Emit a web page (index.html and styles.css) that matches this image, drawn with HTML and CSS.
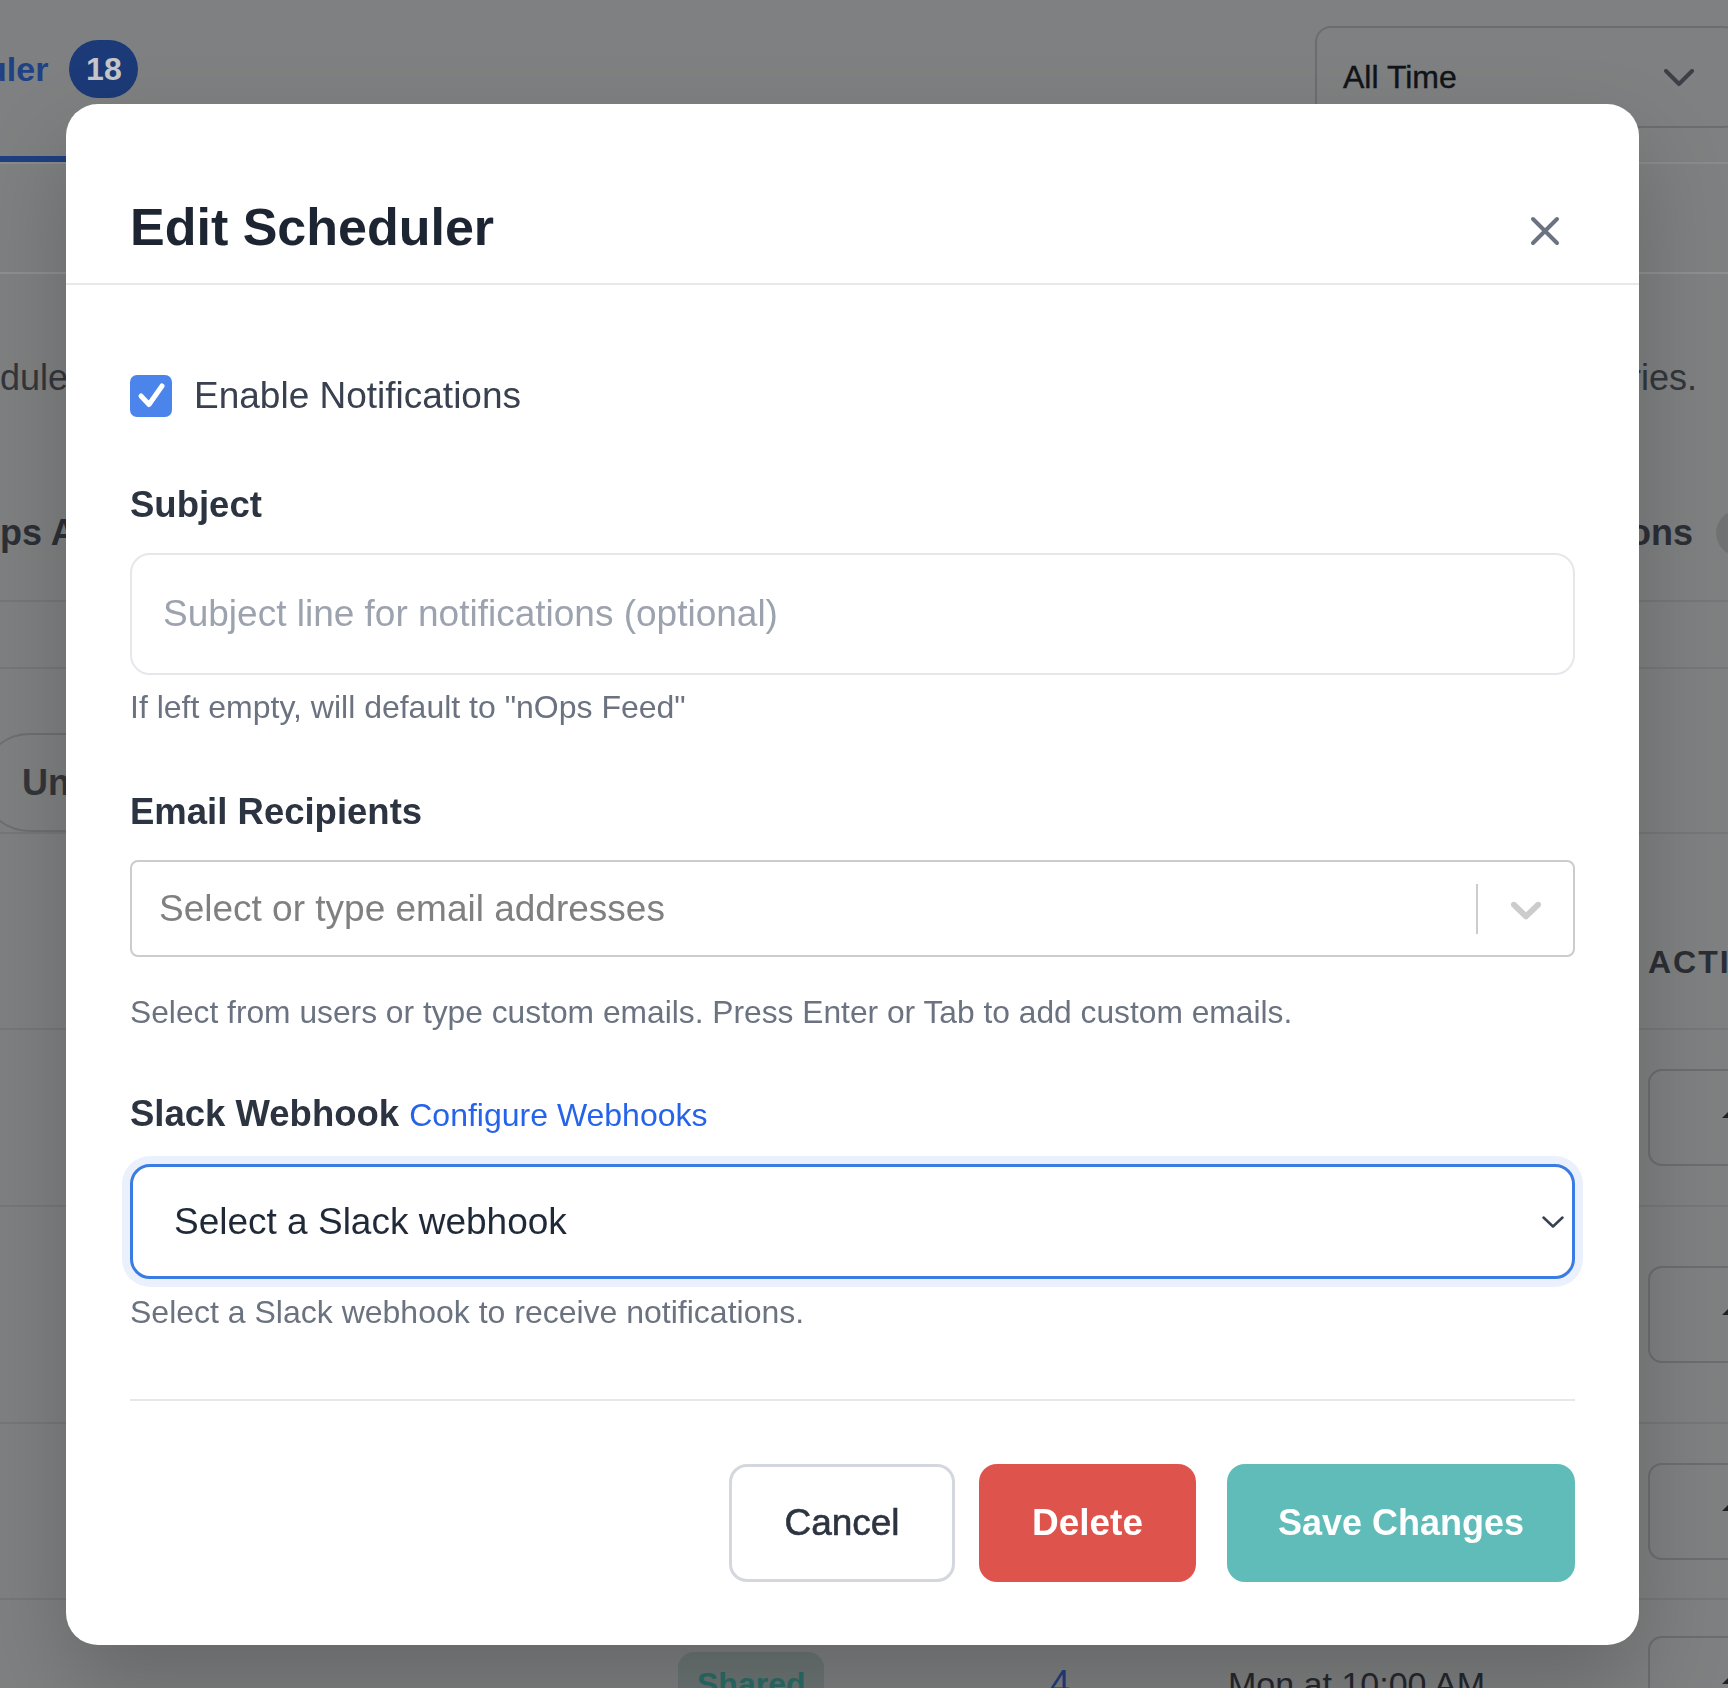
FILE: index.html
```html
<!DOCTYPE html>
<html lang="en">
<head>
    <meta charset="UTF-8">
    <title>Edit Scheduler</title>
    <link rel="stylesheet" href="styles.css">
</head>
<body>
<!--后面的页面（被遮罩压暗）-->
<div class="page">
    <div class="topbar">
        <div class="tab">
            <span class="tab-name">Scheduler</span>
            <span class="tab-count">18</span>
        </div>
        <div class="range">
            <span>All Time</span>
            <svg width="30" height="17" viewBox="0 0 30 17"><path d="M2 2L15 15L28 2" fill="none" stroke="#3c3f45" stroke-width="4" stroke-linecap="round" stroke-linejoin="round"/></svg>
        </div>
    </div>
    <div class="filters"></div>
    <div class="intro">
        <span class="intro-left">Schedule nOps Feed digests for your team</span>
        <span class="intro-right">for selected categories.</span>
    </div>
    <div class="section-head">
        <span class="sh-left">nOps AI Insights</span>
        <span class="sh-right">Scheduled Notifications <span class="sh-count"></span></span>
    </div>
    <div class="subbar"></div>
    <div class="chips"><span class="chip">Unshared</span></div>
    <div class="thead">
        <span></span>
        <span>Status</span>
        <span>Users</span>
        <span>Schedule</span>
        <span>Actions</span>
    </div>
    <div class="row row-a">
        <span></span>
        <span class="pill">Shared</span>
        <span class="count">4</span>
        <span class="when">Mon at 10:00 AM</span>
        <span class="act"><svg width="40" height="40" viewBox="0 0 40 40"><path d="M20 4L4 20H14V36H26V20H36Z" fill="#1f2126"/></svg></span>
    </div>
    <div class="row row-b">
        <span></span>
        <span class="pill">Shared</span>
        <span class="count">4</span>
        <span class="when">Mon at 10:00 AM</span>
        <span class="act"><svg width="40" height="40" viewBox="0 0 40 40"><path d="M20 4L4 20H14V36H26V20H36Z" fill="#1f2126"/></svg></span>
    </div>
    <div class="row row-c">
        <span></span>
        <span class="pill">Shared</span>
        <span class="count">4</span>
        <span class="when">Mon at 10:00 AM</span>
        <span class="act"><svg width="40" height="40" viewBox="0 0 40 40"><path d="M20 4L4 20H14V36H26V20H36Z" fill="#1f2126"/></svg></span>
    </div>
    <div class="row row-d">
        <span></span>
        <span class="pill">Shared</span>
        <span class="count">4</span>
        <span class="when">Mon at 10:00 AM</span>
        <span class="act"><svg width="40" height="40" viewBox="0 0 40 40"><path d="M20 4L4 20H14V36H26V20H36Z" fill="#1f2126"/></svg></span>
    </div>
</div>

<!--弹窗-->
<div class="overlay">
    <div class="modal">
        <div class="modal-head">
            <h2 class="modal-title">Edit Scheduler</h2>
            <button class="close" type="button">
                <svg width="30" height="30" viewBox="0 0 30 30"><path d="M3 3L27 27M27 3L3 27" fill="none" stroke="#6b7280" stroke-width="4" stroke-linecap="round"/></svg>
            </button>
        </div>
        <div class="modal-body">
            <div class="check-row">
                <span class="checkbox">
                    <svg width="42" height="42" viewBox="0 0 42 42"><path d="M11 21L19 29.5L32 11" fill="none" stroke="#fff" stroke-width="5" stroke-linecap="round" stroke-linejoin="round"/></svg>
                </span>
                <span>Enable Notifications</span>
            </div>

            <div class="field field-subject">
                <div class="label">Subject</div>
                <input class="text-input" type="text" placeholder="Subject line for notifications (optional)">
                <div class="hint">If left empty, will default to "nOps Feed"</div>
            </div>

            <div class="field field-email">
                <div class="label">Email Recipients</div>
                <div class="multi">
                    <span class="multi-value">Select or type email addresses</span>
                    <span class="multi-sep"></span>
                    <span class="multi-arrow">
                        <svg width="52" height="52" viewBox="0 0 20 20"><path fill="#cccccc" d="M4.516 7.548c0.436-0.446 1.043-0.481 1.576 0l3.908 3.747 3.908-3.747c0.533-0.481 1.141-0.446 1.574 0 0.436 0.445 0.408 1.197 0 1.615-0.406 0.418-4.695 4.502-4.695 4.502-0.217 0.223-0.502 0.335-0.787 0.335s-0.57-0.112-0.789-0.335c0 0-4.287-4.084-4.695-4.502s-0.436-1.17 0-1.615z"/></svg>
                    </span>
                </div>
                <div class="hint">Select from users or type custom emails. Press Enter or Tab to add custom emails.</div>
            </div>

            <div class="field field-slack">
                <div class="label">Slack Webhook <a class="link" href="#">Configure Webhooks</a></div>
                <div class="select">
                    <span>Select a Slack webhook</span>
                    <svg width="22" height="12" viewBox="0 0 22 12"><path d="M1.5 1.5L11 10.5L20.5 1.5" fill="none" stroke="#374151" stroke-width="2.5" stroke-linecap="round" stroke-linejoin="round"/></svg>
                </div>
                <div class="hint">Select a Slack webhook to receive notifications.</div>
            </div>
        </div>
        <div class="modal-foot">
            <button class="btn btn-cancel" type="button">Cancel</button>
            <button class="btn btn-delete" type="button">Delete</button>
            <button class="btn btn-save" type="button">Save Changes</button>
        </div>
    </div>
</div>
</body>
</html>
```

FILE: styles.css
```css
* {
    margin: 0;
    padding: 0;
    box-sizing: border-box;
}

body {
    font-family: "Liberation Sans", Arial, sans-serif;
    background: #7f8081;
    overflow: hidden;
}

/* 背景页面 */
.page {
    width: 1728px;
    height: 1688px;
    overflow: hidden;
}

.topbar {
    display: flex;
    justify-content: space-between;
    align-items: flex-start;
    height: 164px;
    border-bottom: 2px solid #8a8b8c;
}

.tab {
    display: flex;
    align-items: flex-start;
    gap: 21px;
    height: 162px;
    padding-top: 40px;
    margin-left: -116px;
    border-bottom: 6px solid #1f3f80;
}

.tab-name {
    font-size: 34px;
    line-height: 58px;
    font-weight: bold;
    color: #1f4185;
}

.tab-count {
    width: 69px;
    height: 58px;
    border-radius: 29px;
    background: #1b3a77;
    color: #c4c6ca;
    font-size: 32px;
    font-weight: bold;
    display: flex;
    align-items: center;
    justify-content: center;
}

.range {
    margin-top: 26px;
    margin-right: -12px;
    width: 425px;
    height: 102px;
    border: 2px solid #6c6d6f;
    border-radius: 16px;
    display: flex;
    align-items: center;
    justify-content: space-between;
    padding: 0 44px 0 26px;
    font-size: 32px;
    color: #111418;
    -webkit-text-stroke: 0.4px #111418;
}

.filters {
    height: 110px;
    border-bottom: 2px solid #8e8f90;
}

.intro {
    height: 208px;
    display: flex;
    justify-content: space-between;
    align-items: center;
    padding-right: 31px;
    font-size: 36px;
    color: #33363b;
    white-space: nowrap;
}

.intro-left {
    margin-left: -82px;
}

.section-head {
    height: 118px;
    padding-bottom: 16px;
    margin-right: -34px;
    display: flex;
    justify-content: space-between;
    align-items: center;
    font-size: 36px;
    font-weight: bold;
    color: #2c2f35;
    white-space: nowrap;
}

.sh-left {
    margin-left: -50px;
}

.sh-right {
    display: flex;
    align-items: center;
    gap: 23px;
}

.sh-count {
    width: 46px;
    height: 46px;
    border-radius: 50%;
    background: #717274;
}

.subbar {
    height: 69px;
    border-top: 2px solid #767778;
    border-bottom: 2px solid #767778;
}

.chips {
    height: 165px;
    padding-top: 64px;
    border-bottom: 2px solid #767778;
}

.chip {
    display: inline-flex;
    align-items: center;
    height: 99px;
    margin-left: -20px;
    padding: 0 40px;
    border: 2px solid #6e6f71;
    border-radius: 50px;
    font-size: 36px;
    font-weight: bold;
    color: #33353a;
}

.thead,
.row {
    display: grid;
    grid-template-columns: 678px 372px 178px 420px 1fr;
    border-bottom: 2px solid #767778;
}

.thead {
    height: 196px;
    padding-bottom: 46px;
    align-items: end;
    font-size: 32px;
    line-height: 40px;
    font-weight: bold;
    letter-spacing: 2px;
    text-transform: uppercase;
    color: #2b2e33;
}

.row {
    align-items: center;
}

.row-a { height: 177px; }
.row-b { height: 217px; }
.row-c { height: 176px; }
.row-d { height: 170px; }

.pill {
    justify-self: start;
    display: flex;
    align-items: center;
    height: 64px;
    padding: 0 19px;
    border-radius: 16px;
    background: #6c7675;
    color: #2b6d68;
    font-size: 32px;
    font-weight: bold;
}

.count {
    font-size: 36px;
    color: #1f3f80;
}

.when {
    font-size: 34px;
    color: #25282d;
    white-space: nowrap;
}

.act {
    display: flex;
    align-items: center;
    width: 140px;
    height: 97px;
    padding-left: 68px;
    border: 2px solid #6c6d6f;
    border-radius: 14px;
}

/* 弹窗 */
.overlay {
    position: fixed;
    top: 0;
    left: 0;
    right: 0;
    bottom: 0;
}

.modal {
    width: 1573px;
    margin: 104px 0 0 66px;
    background: #fff;
    border-radius: 32px;
    box-shadow: 0 40px 90px rgba(0, 0, 0, 0.2);
}

.modal-head {
    display: flex;
    justify-content: space-between;
    align-items: center;
    padding: 93px 64px 26px;
    border-bottom: 2px solid #e6e8ec;
}

.modal-title {
    font-size: 52px;
    line-height: 60px;
    font-weight: bold;
    color: #1e2532;
}

.close {
    width: 60px;
    height: 60px;
    margin: 4px 0 -4px;
    display: flex;
    align-items: center;
    justify-content: center;
    border: 0;
    background: none;
    cursor: pointer;
}

.modal-body {
    padding: 90px 64px 0;
}

.check-row {
    display: flex;
    align-items: center;
    gap: 22px;
    height: 42px;
    font-size: 37px;
    color: #394150;
}

.checkbox {
    width: 42px;
    height: 42px;
    border-radius: 7px;
    background: #4b85ec;
    display: flex;
}

.field {
    margin-top: 66px;
}

.field-email {
    margin-top: 63px;
}

.field-slack {
    margin-top: 60px;
}

.label {
    font-size: 36.5px;
    line-height: 44px;
    font-weight: bold;
    color: #2d3441;
    margin-bottom: 26px;
}

.field-slack .label {
    margin-bottom: 27px;
}

.link {
    font-size: 32px;
    font-weight: normal;
    color: #2563eb;
    text-decoration: none;
}

.text-input {
    display: block;
    width: 100%;
    height: 122px;
    border: 2px solid #e5e7eb;
    border-radius: 20px;
    padding: 0 31px;
    font-family: "Liberation Sans", Arial, sans-serif;
    font-size: 37px;
    color: #1f2937;
    outline: none;
}

.text-input::placeholder {
    color: #9ca3af;
}

.hint {
    margin-top: 12px;
    font-size: 32px;
    line-height: 40px;
    color: #6b7280;
}

.field-email .hint {
    margin-top: 35px;
    font-size: 31.75px;
}

.field-slack .hint {
    margin-top: 13px;
}

.multi {
    display: flex;
    align-items: center;
    height: 97px;
    border: 2px solid #cccccc;
    border-radius: 8px;
}

.multi-value {
    flex: 1;
    padding-left: 27px;
    font-size: 37px;
    color: #808080;
}

.multi-sep {
    width: 2px;
    height: 50px;
    background: #cccccc;
}

.multi-arrow {
    width: 95px;
    display: flex;
    justify-content: center;
}

.select {
    display: flex;
    align-items: center;
    justify-content: space-between;
    height: 115px;
    border: 3px solid #3b7be4;
    border-radius: 20px;
    box-shadow: 0 0 0 8px #eaf0fc;
    padding: 0 8px 0 41px;
    font-size: 37px;
    color: #1f2937;
}

.modal-foot {
    display: flex;
    justify-content: flex-end;
    margin: 67px 64px 0;
    padding: 63px 0;
    border-top: 2px solid #e5e7eb;
}

.btn {
    height: 118px;
    border: 0;
    border-radius: 18px;
    font-family: "Liberation Sans", Arial, sans-serif;
    font-size: 37px;
    cursor: pointer;
}

.btn-cancel {
    width: 226px;
    border: 3px solid #d4d7dd;
    background: #fff;
    color: #2d3441;
    -webkit-text-stroke: 0.6px #2d3441;
}

.btn-delete {
    width: 217px;
    margin-left: 24px;
    background: #df534d;
    color: #fff;
    font-weight: bold;
}

.btn-save {
    width: 348px;
    margin-left: 31px;
    background: #5fbcb8;
    color: #fff;
    font-size: 36px;
    font-weight: bold;
}
```
